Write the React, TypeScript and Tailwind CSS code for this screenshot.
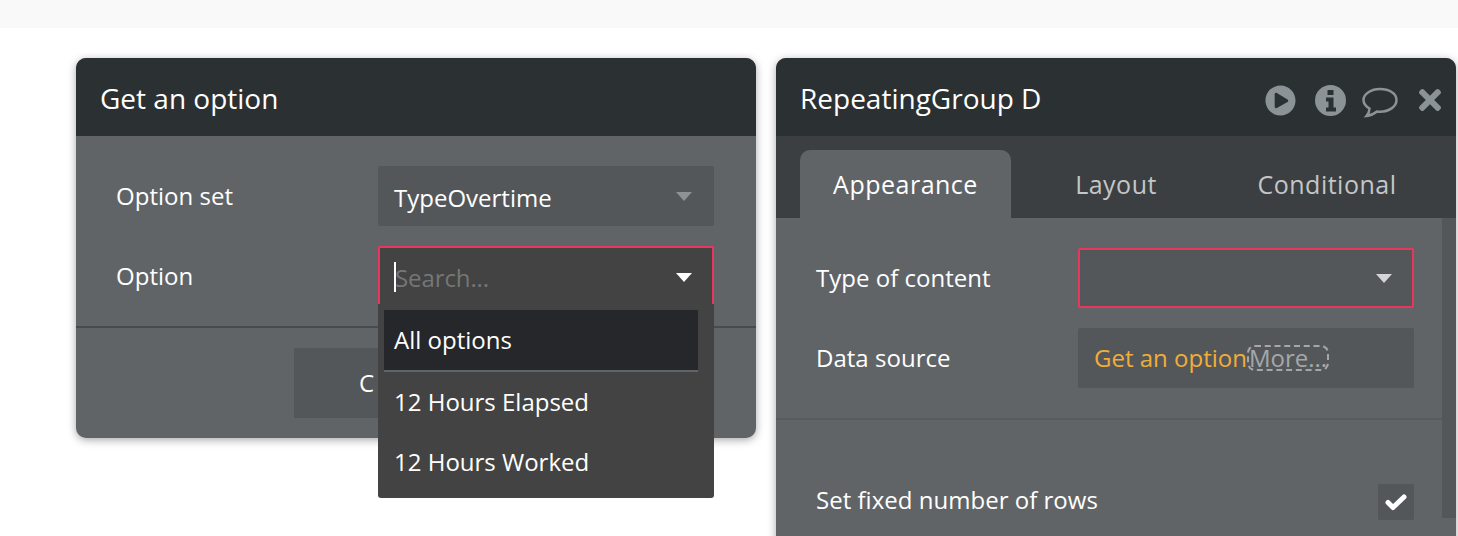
import { FaPlayCircle, FaTimes } from "react-icons/fa";

const Caret = ({ className }: { className: string }) => (
  <svg viewBox="0 0 16 9" className={`w-4 h-[9px] ${className}`}>
    <path d="M0 0h16l-8 9z" fill="currentColor" />
  </svg>
);

const Label = ({ text }: { text: string }) => (
  <div className="text-[24px] leading-none tracking-[0.02px] text-white">{text}</div>
);

const Field = ({ label, children }: { label: string; children: React.ReactNode }) => (
  <div className="flex items-center justify-between h-[60px]">
    <Label text={label} />
    {children}
  </div>
);

const InfoIcon = () => (
  <svg viewBox="0 0 31 31" className="w-[31px] h-[31px] mr-4">
    <path
      fillRule="evenodd"
      fill="currentColor"
      d="M15.500 0a15.500 15.500 0 1 0 0 31 15.500 15.500 0 0 0 0-31zM12.500 5h6v5h-6zM11 12.500h7.500v10h2.500v4H11v-4h2.500v-6H11z"
    />
  </svg>
);

const CommentIcon = () => (
  <svg viewBox="0 0 36 32" className="w-9 h-8 mr-5 mt-[5px]">
    <path
      fill="none"
      stroke="currentColor"
      strokeWidth="2.500"
      d="M18 2C9 2 1.500 7 1.500 13c0 3.500 2.500 6.500 6 8.500 0 2.500-1 5-3 7.500 4-.5 8-2.500 10.500-4.500 1 .1 2 .2 3 .2 9 0 16.500-5 16.500-11.700S27 2 18 2z"
    />
  </svg>
);

const CheckIcon = () => (
  <svg viewBox="0 0 22 18" className="w-[22px] h-[18px]">
    <path d="M3 9.500l5 5L19 4" fill="none" stroke="currentColor" strokeWidth="5" strokeLinejoin="round" strokeLinecap="round" />
  </svg>
);

const App = () => {
  return (
    <div className="h-[536px] overflow-hidden bg-white font-['Open_Sans',sans-serif]">
      <div className="h-[28px] bg-[#f9f9f9]" />
      <div className="flex items-start gap-5 pt-[30px] pl-[76px]">
        {/* left panel */}
        <div className="w-[680px] h-[380px] rounded-[10px] bg-[#606467] shadow-[0_2px_8px_rgba(0,0,0,0.35)]">
          <div className="flex items-center h-[78px] px-6 pt-[2px] rounded-t-[10px] bg-[#2b3033] text-[28px] text-white">
            Get an option
          </div>
          <div className="flex flex-col gap-5 pt-[30px] pl-10 pr-[42px]">
            <Field label="Option set">
              <div className="flex items-center justify-between w-[336px] h-[60px] pl-4 pr-[22px] rounded-[2px] bg-[#54575a] text-[24px] text-white">
                <span className="pt-1">TypeOvertime</span>
                <Caret className="text-[#8f9294]" />
              </div>
            </Field>
            <Field label="Option">
              <div className="relative w-[336px] h-[60px]">
                <div className="flex items-center justify-between h-[60px] pl-[14px] pr-[20px] rounded-[2px] border-2 border-b-0 border-[#e8365d] bg-[#434343] text-[24px]">
                  <span className="border-l-2 border-white h-[30px] text-[#767676]">
                    <span className="block -ml-px translate-y-px leading-[30px] tracking-[-0.1px]">Search...</span>
                  </span>
                  <Caret className="text-white" />
                </div>
                <div className="absolute left-0 top-[58px] z-10 w-[336px] h-[194px] pt-[6px] pl-[6px] pr-4 rounded-b-[3px] bg-[#434343] text-[24px] text-white">
                  <div className="flex items-center h-[62px] pl-[10px] bg-[#26272a] border-b-2 border-[#606467]">All options</div>
                  <div className="flex items-center h-[60px] pl-[10px]">12 Hours Elapsed</div>
                  <div className="flex items-center h-[60px] pl-[10px]">12 Hours Worked</div>
                </div>
              </div>
            </Field>
          </div>
          <div className="mt-5 border-t-2 border-[#484b4e] pt-5 flex justify-center">
            <div className="flex items-center w-[244px] h-[70px] pl-[65px] tracking-[5px] bg-[#54575a] text-[24px] text-white">
              Continue
            </div>
          </div>
        </div>

        {/* right panel */}
        <div className="shrink-0 w-[680px] h-[520px] rounded-t-[10px] bg-[#606467] shadow-[0_2px_8px_rgba(0,0,0,0.35)]">
          <div className="flex items-center justify-between h-[78px] pl-6 pr-[10px] pt-[2px] rounded-t-[10px] bg-[#2b3033] text-[28px] text-white">
            RepeatingGroup D
            <div className="flex items-center mt-1 text-[#8b9396]">
              <FaPlayCircle className="w-[31px] h-[31px] mr-[19px]" />
              <InfoIcon />
              <CommentIcon />
              <FaTimes className="w-8 h-8 -ml-1" />
            </div>
          </div>
          <div className="flex items-end h-[82px] pl-6 bg-[#3b3f42] text-[25px] tracking-[0.5px] text-[#c4c6c7]">
            <div className="flex items-center justify-center w-[211px] h-[68px] pt-[2px] rounded-t-[10px] bg-[#606467] text-white">Appearance</div>
            <div className="flex items-center justify-center w-[211px] h-[68px] pt-[2px] pr-px">Layout</div>
            <div className="flex items-center justify-center w-[211px] h-[68px] pt-[2px] pr-px">Conditional</div>
          </div>
          <div className="flex h-[300px]">
            <div className="flex-1">
              <div className="flex flex-col gap-5 pt-[30px] pl-10 pr-7 pb-[30px] border-b-2 border-[#585b5e]">
                <Field label="Type of content">
                  <div className="flex items-center justify-end w-[336px] h-[60px] pr-5 rounded-[2px] border-2 border-[#e8365d] bg-[#54575a]">
                    <Caret className="text-[#d4d5d6]" />
                  </div>
                </Field>
                <Field label="Data source">
                  <div className="flex items-center w-[336px] h-[60px] pl-4 rounded-[2px] bg-[#54575a] text-[24px]">
                    <span className="text-[#f0ad38]">Get an option</span>
                    <span className="rounded-lg border-2 border-dashed border-[#a5a7a9] leading-[22px] text-[#a5a7a9]">More...</span>
                  </div>
                </Field>
              </div>
              <div className="flex items-center justify-between mt-16 pl-10 pr-7">
                <div className="-mt-1"><Label text="Set fixed number of rows" /></div>
                <div className="flex items-center justify-center w-9 h-9 rounded-[2px] bg-[#54575a] text-white">
                  <CheckIcon />
                </div>
              </div>
            </div>
            <div className="w-[14px] bg-[#54575a]" />
          </div>
        </div>
      </div>
    </div>
  );
};

export default App;
